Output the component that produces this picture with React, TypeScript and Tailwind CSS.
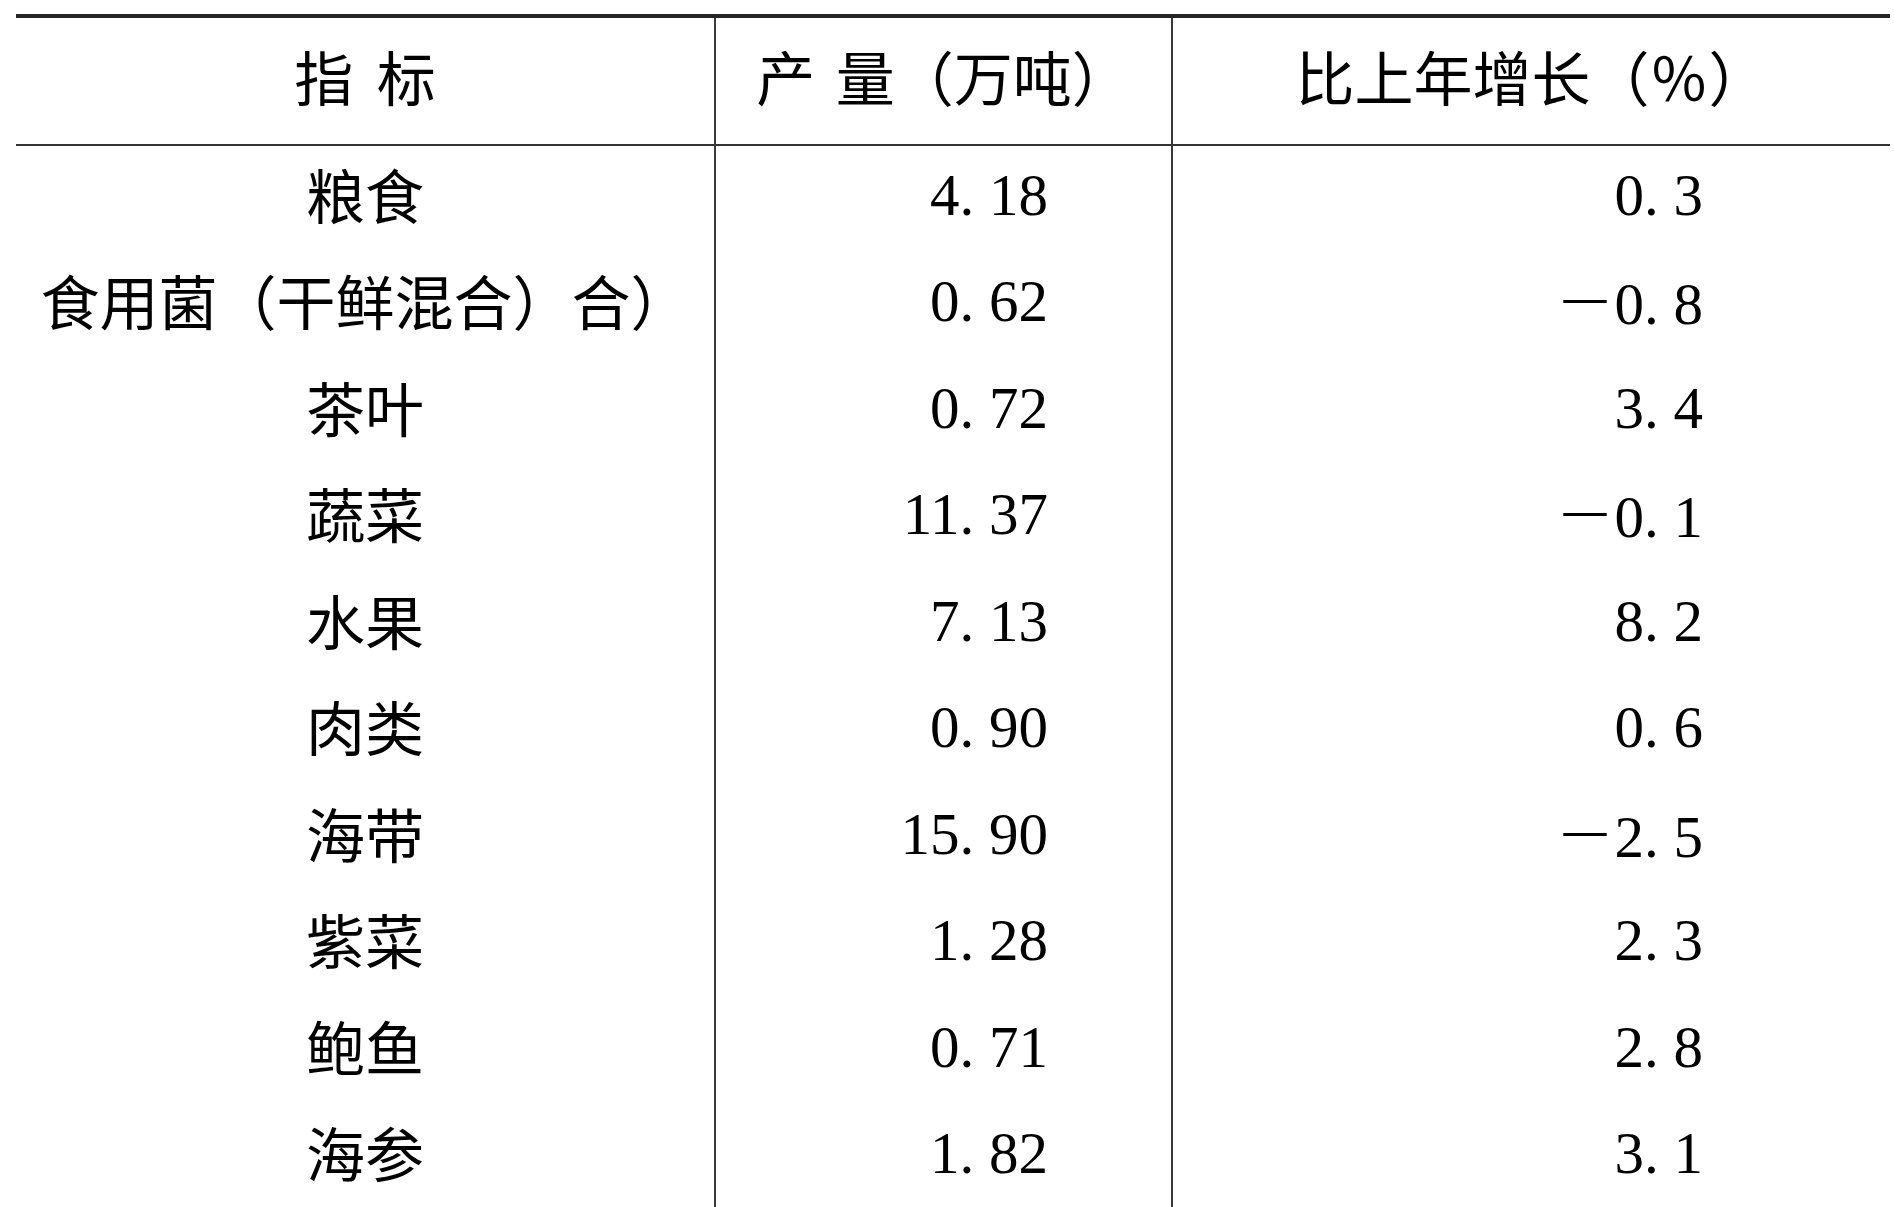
import React from "react";

type Row = { name: string; output: string; growth: string };

const rows: Row[] = [
  { name: "粮食", output: "4.18", growth: "0.3" },
  { name: "食用菌（干鲜混合）合）", output: "0.62", growth: "-0.8" },
  { name: "茶叶", output: "0.72", growth: "3.4" },
  { name: "蔬菜", output: "11.37", growth: "-0.1" },
  { name: "水果", output: "7.13", growth: "8.2" },
  { name: "肉类", output: "0.90", growth: "0.6" },
  { name: "海带", output: "15.90", growth: "-2.5" },
  { name: "紫菜", output: "1.28", growth: "2.3" },
  { name: "鲍鱼", output: "0.71", growth: "2.8" },
  { name: "海参", output: "1.82", growth: "3.1" },
];

const cjk = "[font-family:'Noto_Sans_CJK_SC',sans-serif]";

// 数字：半角宽度，小数点占半个字宽
const Num = ({ value }: { value: string }) => {
  const neg = value.startsWith("-");
  const [a, b] = (neg ? value.slice(1) : value).split(".");
  return (
    <span className="[font-family:'Liberation_Serif',serif] whitespace-nowrap">
      {neg && (
        <span className="inline-block w-[1em] text-left [font-family:'Noto_Sans_CJK_SC',sans-serif] font-light">
          －
        </span>
      )}
      {a}
      <span className="inline-block w-[0.5em] text-left">.</span>
      {b}
    </span>
  );
};

export default function App() {
  return (
    <div className="h-[1207px] w-full overflow-hidden bg-white text-black">
      <div className="ml-[16px] mr-[4px] mt-[14px] border-t-[4px] border-[#262626]">
        <div className={`grid grid-cols-[698px_2px_455px_2px_1fr] text-[59px] leading-none ${cjk}`}>
          {/* 表头 */}
          <div className="h-[128px] flex items-center justify-center pb-[12px] border-b-2 border-[#333]">
            指<span className="inline-block w-[0.4em]" />标
          </div>
          <div className="row-span-12 bg-[#3a3a3a]" />
          <div className="h-[128px] flex items-center justify-center pb-[12px] border-b-2 border-[#333]">
            产<span className="inline-block w-[0.35em]" />量（万吨）
          </div>
          <div className="row-span-12 bg-[#3a3a3a]" />
          <div className="h-[128px] flex items-center justify-center pb-[12px] border-b-2 border-[#333]">
            比上年增长（％）
          </div>

          {rows.map((r) => (
            <React.Fragment key={r.name}>
              <div className="h-[106.5px] flex items-center justify-center pb-[12px]">{r.name}</div>
              <div className="h-[106.5px] flex items-center justify-end pr-[123px] pb-[8px]">
                <Num value={r.output} />
              </div>
              <div className="h-[106.5px] flex items-center justify-end pr-[187px] pb-[8px]">
                <Num value={r.growth} />
              </div>
            </React.Fragment>
          ))}
          <div className="h-[40px]" />
          <div className="h-[40px]" />
          <div className="h-[40px]" />
        </div>
      </div>
    </div>
  );
}
